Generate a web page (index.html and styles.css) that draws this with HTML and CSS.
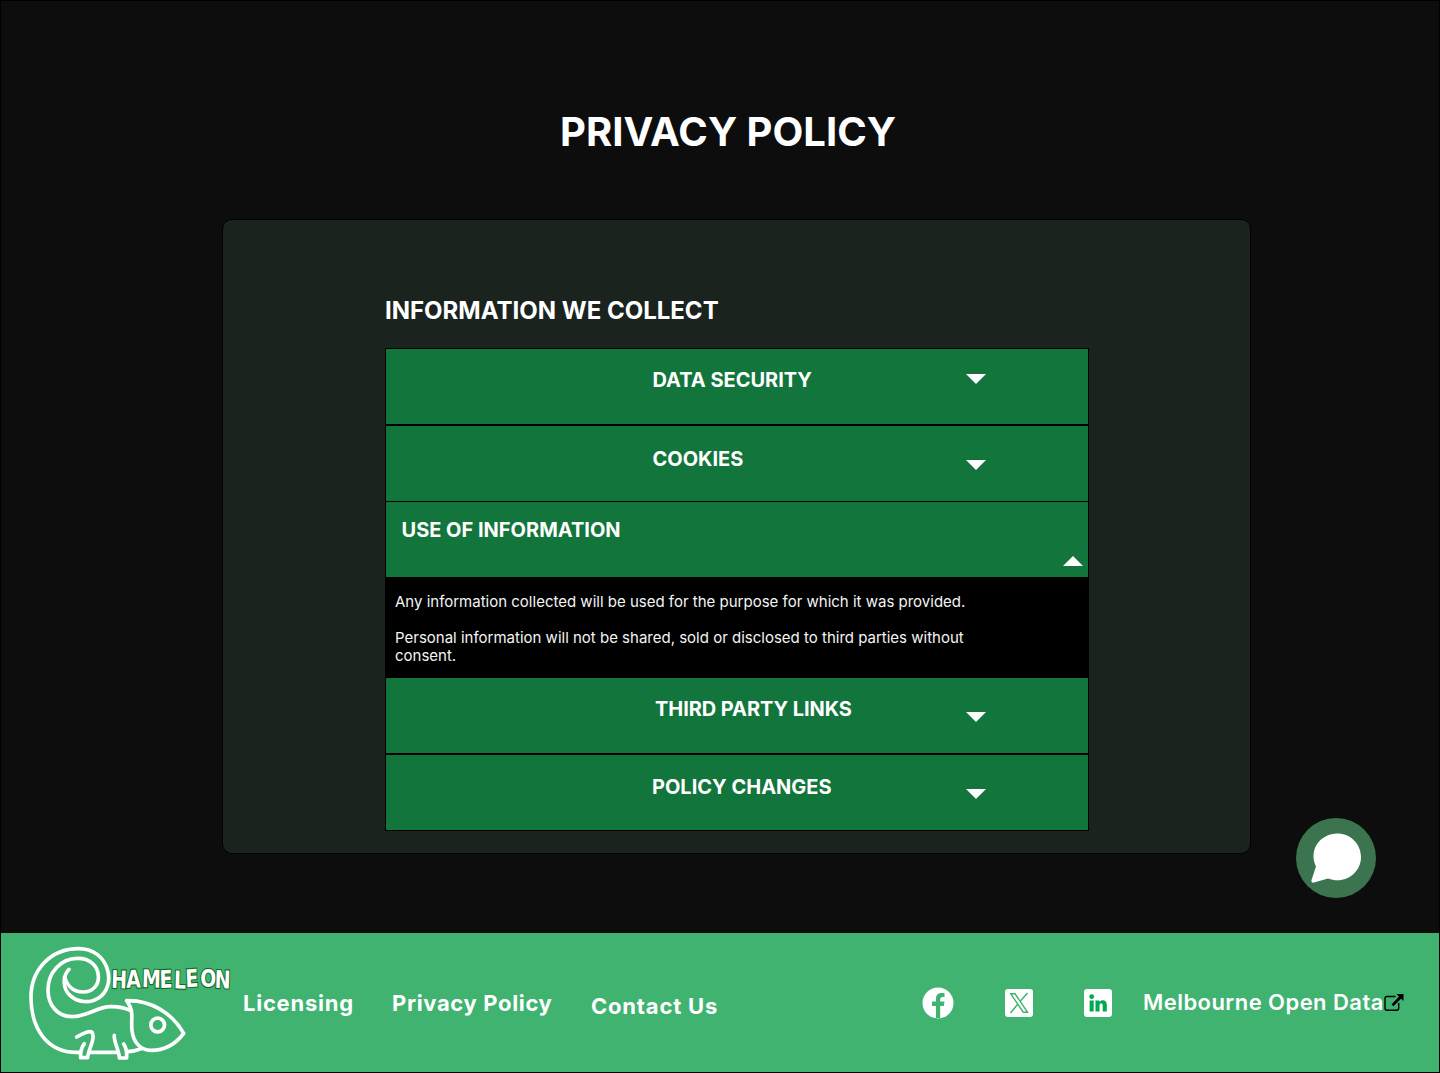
FILE: index.html
```html
<!DOCTYPE html>
<html lang="en">
<head>
<meta charset="utf-8">
<title>Privacy Policy</title>
<link rel="stylesheet" href="styles.css">
</head>
<body>
<div class="page">
  <main class="main">
    <h1 class="title">PRIVACY POLICY</h1>
    <section class="panel">
      <h2 class="panel-heading">INFORMATION WE COLLECT</h2>
      <div class="accordion">
        <div class="row row-security"><h3>DATA SECURITY</h3><svg class="arrow" viewBox="0 0 20 10"><path d="M0 0h20L10 10z"/></svg></div>
        <div class="row row-cookies"><h3>COOKIES</h3><svg class="arrow" viewBox="0 0 20 10"><path d="M0 0h20L10 10z"/></svg></div>
        <div class="row row-use"><h3>USE OF INFORMATION</h3><svg class="arrow" viewBox="0 0 20 10"><path d="M0 10h20L10 0z"/></svg></div>
        <div class="answer">
          <p>Any information collected will be used for the purpose for which it was provided.</p>
          <p>Personal information will not be shared, sold or disclosed to third parties without consent.</p>
        </div>
        <div class="row row-links"><h3>THIRD PARTY LINKS</h3><svg class="arrow" viewBox="0 0 20 10"><path d="M0 0h20L10 10z"/></svg></div>
        <div class="row row-changes"><h3>POLICY CHANGES</h3><svg class="arrow" viewBox="0 0 20 10"><path d="M0 0h20L10 10z"/></svg></div>
      </div>
    </section>
  </main>
  <footer class="footer">
    <svg class="logo" viewBox="3 24 717 417">
      <g fill="none" stroke="#fff" stroke-width="11" stroke-linecap="round" stroke-linejoin="round">
        <path d="M207 133C187 154 188 191 210 211C233 233 270 236 297 218C324 200 331 166 323 136C312 95 279 71 235 71C151 71 93 136 93 216C93 313 143 382 230 382H240M270 382H355M382 380C399 379 410 376 423 371"/>
        <path d="M194 157C202 184 222 201 249 201C279 201 297 180 295 153C293 120 268 100 234 100C181 99 144 145 144 194C144 239 171 275 216 275C262 275 290 246 331 245C353 244 373 248 391 256"/>
        <path d="M380 227C452 225 517 264 551 325C525 360 492 376 453 376C420 376 400 350 396 317C393 294 398 273 394 256C391 243 385 235 380 227Z"/>
        <circle cx="473" cy="300" r="20.500"/>
        <path d="M230 336C249 324 274 313 278 326C285 348 266 367 263 398H242C240 381 244 369 253 356"/>
        <path d="M343 331C340 351 358 374 358 399H380C381 380 379 368 371 357"/>
      </g>
      <text class="wordmark" transform="scale(.78 1)" x="427 486 545 614 668 714 770 825" y="188 188 186 189 190 187 186 188" rotate="2 -1 2 -2 2 -3 0 2">HAMELEON</text>
    </svg>
    <nav class="links">
      <a class="licensing">Licensing</a>
      <a class="privacy">Privacy Policy</a>
      <a class="contact">Contact Us</a>
    </nav>
    <div class="social">
      <svg class="facebook" viewBox="0 0 32 32"><circle cx="16" cy="16" r="15.500" fill="#fff"/><path d="M14 31V19H10V14.500H14V12C14 8 16 6 19.500 6H22.500V10H20.500C18.800 10 18.200 11 18.200 12.500V14.500H22.500L21.800 19H18.200V31Z" fill="#40b371"/></svg>
      <svg class="square" viewBox="0 0 28 28"><rect width="28" height="28" rx="3" fill="#fff"/><g fill="none" stroke="#40b371" stroke-width="1.500"><path d="M5.800 4.800H10L22.500 23.200H18.200Z"/><path d="M22.500 4L15 12.500M12.700 15.300L5.500 24"/></g></svg>
      <svg class="square" viewBox="0 0 28 28"><rect width="28" height="28" rx="3" fill="#fff"/><g fill="#00a950"><circle cx="7.700" cy="7.700" r="2.400"/><path d="M5.600 11.500h4.100V22.500H5.600zM11.500 11.500h4v1.500c2-2.800 7.300-2.300 7.300 2.600v6.900h-4.100v-6c0-3-3.200-2.700-3.200 0v6h-4z"/></g></svg>
    </div>
    <a class="data">Melbourne Open Data</a>
    <svg class="external" viewBox="0 0 20 18"><path d="M11.500 2.500H3Q1 2.500 1 4.500V14Q1 16.200 3 16.200H12.500Q14.700 16.200 14.700 14V9" fill="none" stroke="#000" stroke-width="1.400"/><path d="M12.500 0H19.500V7L17.200 4.800L9.300 12.200L7.500 10.400L15 2.600Z"/></svg>
  </footer>
  <button class="chat" aria-label="Chat"><svg viewBox="0 0 80 80"><path d="M15.500 62L20 48.500C12 31 25 15.500 41.300 15.500C54.500 15.500 65 26 65 39C65 55 49 67 32 60.500L18 64.600Q15 65 15.500 62Z" fill="#fff"/></svg></button>
</div>
</body>
</html>
```

FILE: styles.css
```css
* { box-sizing: border-box; }
body { margin: 0; background: #0d0d0d; color: #fff; font-family: Inter, sans-serif; }
h1, h2, h3, p { margin: 0; }
svg { display: block; flex: none; }

.page { position: relative; display: flex; flex-direction: column; height: 1073px; border: 1px solid #000; }
.main { flex: 1; padding: 107px 0 0 221px; }
.title { margin-left: 338px; font-size: 40px; line-height: 48px; font-weight: 700; }
.panel { width: 1029px; height: 635px; margin-top: 63px; padding: 76px 0 0 162px; border: 1px solid #000; border-radius: 10px; background: #1b231f; }
.panel-heading { font-size: 24px; line-height: 29px; font-weight: 700; }

.accordion { width: 704px; margin-top: 23px; border: 1px solid #000; background: #000; }
.row { display: flex; align-items: flex-start; height: 75px; background: #12753c; }
.row h3 { font-size: 20px; line-height: 24px; font-weight: 700; white-space: nowrap; }
.arrow { width: 20px; height: 10px; margin-left: auto; margin-right: 102px; fill: #fff; }
.row-security { padding: 19px 0 0 266.400px; margin-bottom: 2px; }
.row-security .arrow { margin-top: 6px; }
.row-cookies { padding: 21px 0 0 266.500px; margin-bottom: 1px; }
.row-cookies .arrow { margin-top: 13px; }
.row-use { padding: 16px 0 0 15.500px; }
.row-use .arrow { margin-top: 38px; margin-right: 5px; }
.row-links { padding: 19px 0 0 269px; margin-bottom: 2px; }
.row-links h3 { letter-spacing: -0.06px; }
.row-links .arrow { margin-top: 15px; }
.row-changes { padding: 20px 0 0 266px; }
.row-changes .arrow { margin-top: 14px; }
.answer { display: flex; flex-direction: column; gap: 18px; height: 101px; padding: 16px 100px 0 9px; font-size: 15px; line-height: 18px; color: #f4f4f4; }

.footer { display: flex; align-items: flex-start; height: 139px; background: #40b371; white-space: nowrap; }
.footer a { font-size: 22px; line-height: 26px; font-weight: 700; }
.logo { width: 239px; height: 139px; }
.wordmark { font-family: "DejaVu Sans", sans-serif; font-size: 73px; font-weight: 700; fill: #fff; stroke: #136b24; stroke-width: 7px; paint-order: stroke; }
.links { display: flex; padding-top: 57px; }
.licensing { width: 149px; margin-left: 3px; letter-spacing: 0.75px; }
.privacy { width: 199px; letter-spacing: 0.65px; }
.contact { width: 130px; margin-top: 3px; letter-spacing: 0.8px; }
.social { display: flex; align-items: center; margin: 54px 0 0 201px; }
.facebook { width: 32px; height: 32px; margin-right: 51px; }
.square { width: 28px; height: 28px; }
.square + .square { margin-left: 51px; }
.footer .data { width: 242px; margin: 56px 0 0 31px; font-weight: 600; letter-spacing: 0.45px; }
.external { width: 20px; height: 18px; margin-top: 61px; margin-left: -1px; }

.chat { position: absolute; left: 1295px; top: 817px; width: 80px; height: 80px; padding: 0; border: 0; border-radius: 50%; background: #3b744f; }
```
